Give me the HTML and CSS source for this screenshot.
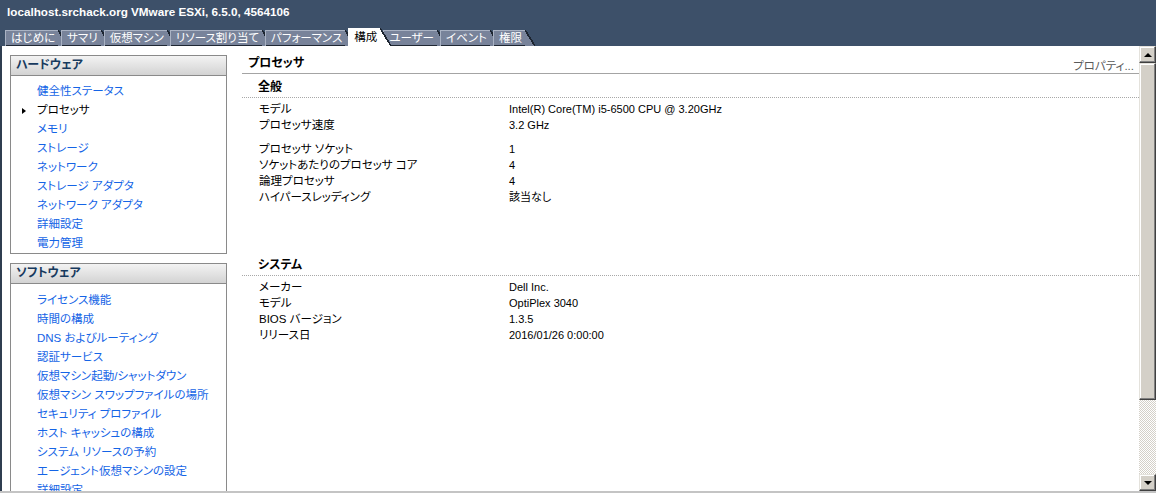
FILE: index.html
```html
<!DOCTYPE html>
<html lang="ja">
<head>
    <meta charset="UTF-8">
    <title>localhost.srchack.org VMware ESXi</title>
    <link rel="stylesheet" href="styles.css">
</head>
<body>
    <!-- Title bar with tabs -->
    <header class="titlebar">
        <div class="title">localhost.srchack.org VMware ESXi, 6.5.0, 4564106</div>
        <nav class="tabs">
            <span class="tab">はじめに</span>
            <span class="tab">サマリ</span>
            <span class="tab">仮想マシン</span>
            <span class="tab">リソース割り当て</span>
            <span class="tab">パフォーマンス</span>
            <span class="tab is-active">構成</span>
            <span class="tab">ユーザー</span>
            <span class="tab">イベント</span>
            <span class="tab">権限</span>
        </nav>
    </header>

    <div class="main">
        <!-- Left navigation -->
        <aside class="sidebar">
            <section class="panel">
                <div class="panel-head">ハードウェア</div>
                <ul class="panel-list">
                    <li><a class="nav-link" href="#">健全性ステータス</a></li>
                    <li class="nav-link is-current">プロセッサ</li>
                    <li><a class="nav-link" href="#">メモリ</a></li>
                    <li><a class="nav-link" href="#">ストレージ</a></li>
                    <li><a class="nav-link" href="#">ネットワーク</a></li>
                    <li><a class="nav-link" href="#">ストレージ アダプタ</a></li>
                    <li><a class="nav-link" href="#">ネットワーク アダプタ</a></li>
                    <li><a class="nav-link" href="#">詳細設定</a></li>
                    <li><a class="nav-link" href="#">電力管理</a></li>
                </ul>
            </section>
            <section class="panel">
                <div class="panel-head">ソフトウェア</div>
                <ul class="panel-list">
                    <li><a class="nav-link" href="#">ライセンス機能</a></li>
                    <li><a class="nav-link" href="#">時間の構成</a></li>
                    <li><a class="nav-link" href="#">DNS およびルーティング</a></li>
                    <li><a class="nav-link" href="#">認証サービス</a></li>
                    <li><a class="nav-link" href="#">仮想マシン起動/シャットダウン</a></li>
                    <li><a class="nav-link" href="#">仮想マシン スワップファイルの場所</a></li>
                    <li><a class="nav-link" href="#">セキュリティ プロファイル</a></li>
                    <li><a class="nav-link" href="#">ホスト キャッシュの構成</a></li>
                    <li><a class="nav-link" href="#">システム リソースの予約</a></li>
                    <li><a class="nav-link" href="#">エージェント仮想マシンの設定</a></li>
                    <li><a class="nav-link" href="#">詳細設定</a></li>
                </ul>
            </section>
        </aside>

        <!-- Processor details -->
        <section class="content">
            <div class="content-head">
                <span class="content-title">プロセッサ</span>
                <span class="props">プロパティ...</span>
            </div>

            <div class="group">
                <div class="group-head">全般</div>
                <div class="fields">
                    <span>モデル</span><span class="value">Intel(R) Core(TM) i5-6500 CPU @ 3.20GHz</span>
                    <span>プロセッサ速度</span><span class="value">3.2 GHz</span>
                    <span class="field-gap"></span>
                    <span>プロセッサ ソケット</span><span class="value">1</span>
                    <span>ソケットあたりのプロセッサ コア</span><span class="value">4</span>
                    <span>論理プロセッサ</span><span class="value">4</span>
                    <span>ハイパースレッディング</span><span class="value">該当なし</span>
                </div>
            </div>

            <div class="group group-system">
                <div class="group-head">システム</div>
                <div class="fields">
                    <span>メーカー</span><span class="value">Dell Inc.</span>
                    <span>モデル</span><span class="value">OptiPlex 3040</span>
                    <span>BIOS バージョン</span><span class="value">1.3.5</span>
                    <span>リリース日</span><span class="value">2016/01/26 0:00:00</span>
                </div>
            </div>
        </section>

        <!-- Classic scrollbar -->
        <div class="scrollbar">
            <div class="sb-btn"><span class="arrow-up"></span></div>
            <div class="sb-thumb"></div>
            <div class="sb-track"></div>
            <div class="sb-btn"><span class="arrow-down"></span></div>
        </div>
    </div>
</body>
</html>
```

FILE: styles.css
```css
body {
    margin: 0;
    width: 1156px;
    height: 493px;
    overflow: hidden;
    background-color: #c4c4c4;
    font-family: "Liberation Sans", "Noto Sans CJK JP", sans-serif;
    font-size: 11.5px;
    font-feature-settings: "palt";
    color: #000;
}

/* Title bar */
.titlebar {
    height: 46px;
    background-color: #3d5069;
    display: flex;
    flex-direction: column;
    justify-content: space-between;
}

.title {
    color: #fff;
    font-weight: bold;
    font-size: 11.7px;
    line-height: 16px;
    padding: 4px 0 0 7px;
}

.tabs {
    display: flex;
    align-items: flex-end;
    height: 18px;
    padding-left: 5px;
}

.tab {
    position: relative;
    height: 16px;
    line-height: 16px;
    padding: 0 3px 0 6px;
    margin-right: 3px;
    background-color: #78839a;
    color: #fff;
    box-shadow: inset 1px 1px 0 #a9b2c3, inset 0 -1px 0 #1f2733;
}

.tab::after {
    content: '';
    position: absolute;
    top: 0;
    right: -10px;
    width: 10px;
    height: 100%;
    background: linear-gradient(to top right, #78839a calc(50% - 0.8px), #1c2430 calc(50% - 0.8px) calc(50% + 0.8px), transparent calc(50% + 0.8px));
}

.tab.is-active {
    height: 18px;
    line-height: 18px;
    background-color: #fff;
    color: #000;
    box-shadow: none;
    z-index: 1;
}

.tab.is-active::after {
    width: 11px;
    right: -11px;
    background: linear-gradient(to top right, #fff calc(50% - 0.8px), #1c2430 calc(50% - 0.8px) calc(50% + 0.8px), transparent calc(50% + 0.8px));
}

/* Main area */
.main {
    display: flex;
    height: 445px;
    background-color: #fff;
    border-left: 2px solid #2f3d50;
}

.sidebar {
    width: 240px;
    flex: none;
    box-sizing: border-box;
    padding: 9px 0 0 8px;
    overflow: hidden;
}

.panel {
    width: 217px;
    box-sizing: border-box;
    border: 1px solid #8a8a8a;
    margin-bottom: 9px;
}

.panel-head {
    height: 19px;
    line-height: 19px;
    padding-left: 5px;
    font-weight: bold;
    font-size: 12px;
    color: #173a5e;
    background: linear-gradient(#f3f3f3, #d3d3d3);
    border-bottom: 1px solid #8a8a8a;
}

.panel-list {
    list-style: none;
    margin: 0;
    padding: 6px 0 0;
    line-height: 19px;
}

.panel + .panel .panel-list {
    padding-top: 7px;
}

.nav-link {
    display: block;
    padding-left: 26px;
    color: #1464e6;
    text-decoration: none;
    white-space: nowrap;
}

.nav-link.is-current {
    display: flex;
    align-items: center;
    padding-left: 0;
    color: #000;
}

.nav-link.is-current::before {
    content: '';
    width: 0;
    height: 0;
    border-left: 4px solid #000;
    border-top: 3px solid transparent;
    border-bottom: 3px solid transparent;
    margin: 0 11px;
}

/* Details panel */
.content {
    flex: 1;
    min-width: 0;
    display: flex;
    flex-direction: column;
}

.content-head {
    height: 28px;
    box-sizing: border-box;
    display: flex;
    justify-content: space-between;
    align-items: flex-end;
    padding: 0 5px 2px 6px;
    border-bottom: 1px solid #a4a4a4;
}

.content-title {
    font-weight: bold;
    font-size: 12px;
    line-height: 16px;
}

.props {
    color: #5a5a5a;
    line-height: 12px;
    margin-bottom: -1px;
}

.group-head {
    padding: 5px 0 2px 16px;
    line-height: 16px;
    font-weight: bold;
    font-size: 12px;
    border-bottom: 1px dotted #a8a8a8;
}

.group-system {
    margin-top: 47px;
}

.fields {
    display: grid;
    grid-template-columns: 250px 1fr;
    padding: 3px 0 0 17px;
    line-height: 16px;
}

.value {
    font-size: 11px;
}

.field-gap {
    grid-column: 1 / -1;
    height: 8px;
}

/* Scrollbar */
.scrollbar {
    width: 17px;
    flex: none;
    display: flex;
    flex-direction: column;
    background: repeating-conic-gradient(#d4d0c8 0 25%, #fff 0 50%) 0 0 / 2px 2px;
}

.sb-btn,
.sb-thumb {
    box-sizing: border-box;
    background-color: #d4d0c8;
    border: 1px solid;
    border-color: #e4e2dc #404040 #404040 #e4e2dc;
    box-shadow: inset -1px -1px 0 #808080, inset 1px 1px 0 #fff;
}

.sb-btn {
    height: 17px;
    display: flex;
    align-items: center;
    justify-content: center;
}

.sb-thumb {
    height: 337px;
}

.sb-track {
    flex: 1;
}

.arrow-up,
.arrow-down {
    width: 0;
    height: 0;
    border-left: 4px solid transparent;
    border-right: 4px solid transparent;
}

.arrow-up {
    border-bottom: 4px solid #000;
}

.arrow-down {
    border-top: 4px solid #000;
}
```
